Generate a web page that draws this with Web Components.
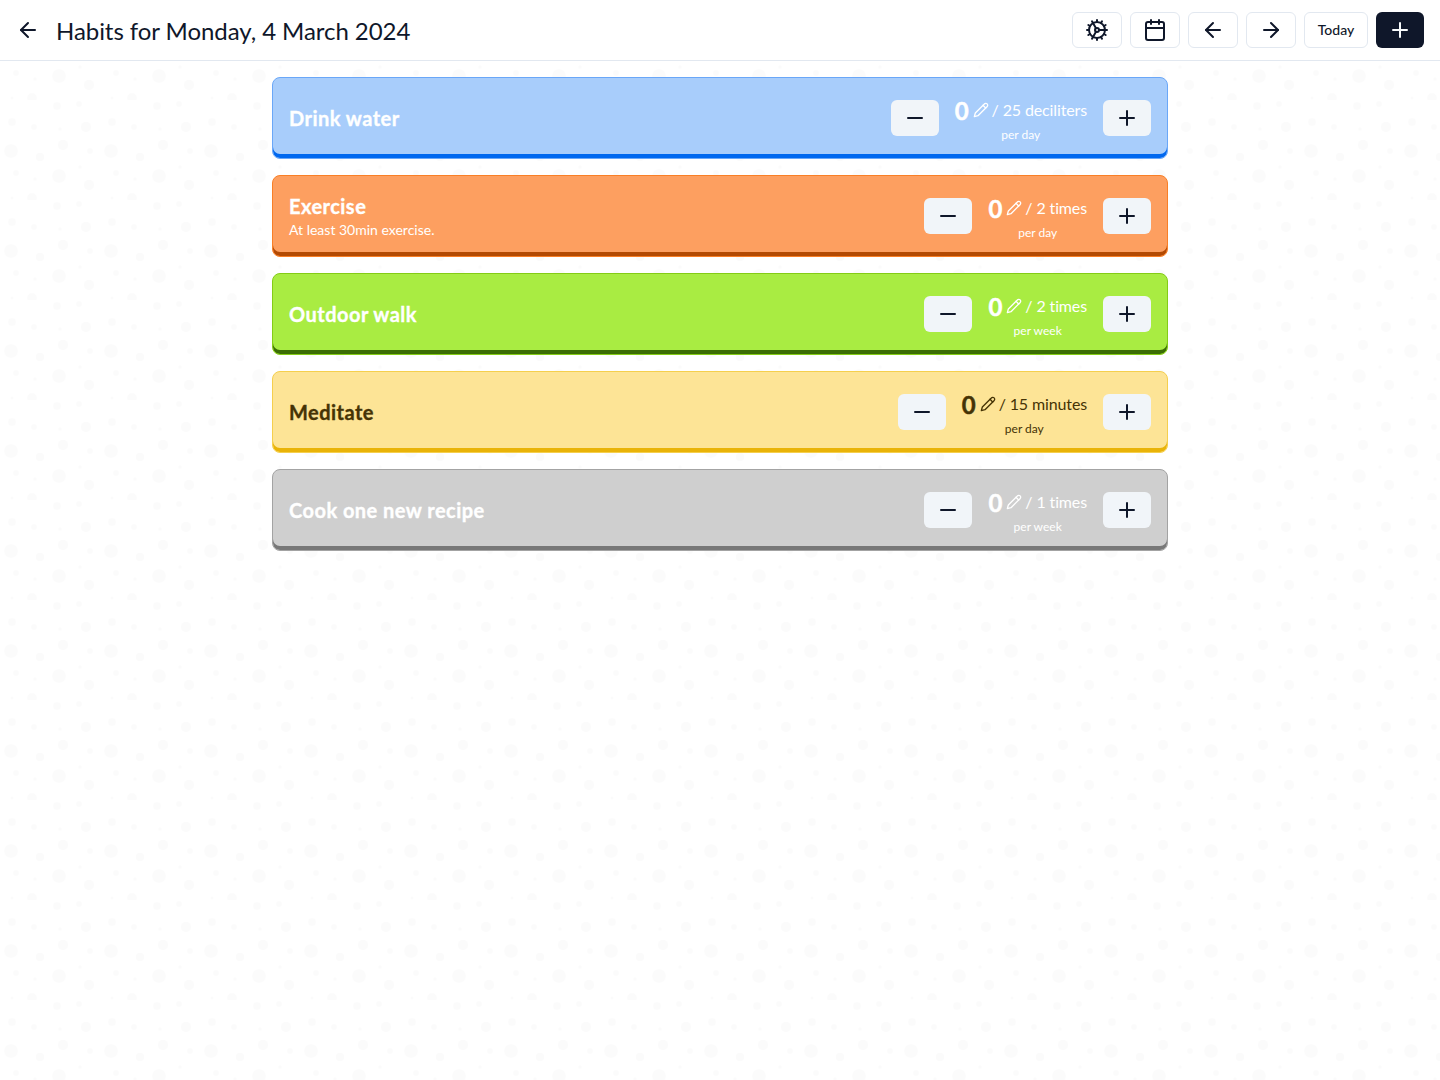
<!doctype html>
<html>
<head>
<meta charset="utf-8">
<title>Habits</title>
<style>
	html, body { margin: 0; min-height: 100%; }
	body {
		min-height: 1080px;
		font-family: Lato, "Noto Sans", sans-serif;
		color: #0f172a;
		background-color: #fff;
		background-image: url("data:image/svg+xml,%3Csvg xmlns='http://www.w3.org/2000/svg' width='100' height='100'%3E%3Cg fill='%23000' fill-opacity='.014'%3E%3Ccircle cx='12' cy='22' r='3.7'/%3E%3Ccircle cx='34' cy='27' r='2.7'/%3E%3Ccircle cx='60' cy='29' r='1.5'/%3E%3Ccircle cx='86' cy='27' r='5'/%3E%3Ccircle cx='11' cy='51' r='6.7'/%3E%3Ccircle cx='40' cy='57' r='4'/%3E%3Ccircle cx='63' cy='45' r='5'/%3E%3Ccircle cx='90' cy='51' r='2.7'/%3E%3Ccircle cx='16' cy='73' r='2.7'/%3E%3Ccircle cx='35' cy='79' r='1.5'/%3E%3Ccircle cx='59' cy='76' r='6.7'/%3E%3Ccircle cx='80' cy='67' r='1.5'/%3E%3Ccircle cx='89' cy='85' r='5'/%3E%3Ccircle cx='12' cy='98' r='1.3'/%3E%3Ccircle cx='32' cy='98' r='4.7'/%3E%3Ccircle cx='57' cy='6' r='3.7'/%3E%3Ccircle cx='79' cy='4' r='2.7'/%3E%3C/g%3E%3C/svg%3E");
	}
</style>
</head>
<body>
<habit-page>
	<span slot="title">Habits for Monday, 4 March 2024</span>
	<habit-card goal="25" unit="deciliters" period="per day" tone="#a8cdfb" line="#6aa7f8" edge="#0068ef" ink="#fff">Drink water</habit-card>
	<habit-card goal="2" unit="times" period="per day" tone="#fd9f60" line="#f97f26" edge="#b34a03" ink="#fff">Exercise<span slot="description">At least 30min exercise.</span></habit-card>
	<habit-card goal="2" unit="times" period="per week" tone="#a9ec42" line="#84cc16" edge="#3b6d05" ink="#fff">Outdoor walk</habit-card>
	<habit-card goal="15" unit="minutes" period="per day" tone="#fde496" line="#f5cf4d" edge="#e9b308" ink="#453305">Meditate</habit-card>
	<habit-card goal="1" unit="times" period="per week" tone="#cfcfcf" line="#a3a3a3" edge="#787878" ink="#fff">Cook one new recipe</habit-card>
</habit-page>

<script>
	const iconParts = {
		back: `<path d="m12 19-7-7 7-7"/><path d="M19 12H5"/>`,
		forward: `<path d="M5 12h14"/><path d="m12 5 7 7-7 7"/>`,
		plus: `<path d="M5 12h14"/><path d="M12 5v14"/>`,
		minus: `<path d="M5 12h14"/>`,
		pencil: `<path d="M17 3a2.85 2.83 0 1 1 4 4L7.5 20.5 2 22l1.5-5.5Z"/><path d="m15 5 4 4"/>`,
		calendar: `<path d="M8 2v4"/><path d="M16 2v4"/><rect width="18" height="18" x="3" y="4" rx="2"/><path d="M3 10h18"/>`,
		cog: `<path d="M12 20a8 8 0 1 0 0-16 8 8 0 0 0 0 16Z"/><path d="M12 14a2 2 0 1 0 0-4 2 2 0 0 0 0 4Z"/><path d="M12 2v2"/><path d="M12 22v-2"/><path d="m17 20.66-1-1.73"/><path d="M11 10.27 7 3.34"/><path d="m20.66 17-1.73-1"/><path d="m3.34 7 1.73 1"/><path d="M14 12h8"/><path d="M2 12h2"/><path d="m20.66 7-1.73 1"/><path d="m3.34 17 1.73-1"/><path d="m17 3.34-1 1.73"/><path d="m11 13.73-4 6.93"/>`
	};

	customElements.define("habit-icon",
		class extends HTMLElement {
			connectedCallback(){
				const size = this.getAttribute("size") || 24;
				this.attachShadow({ mode: "open" }).innerHTML = `
					<style>
						:host { display: inline-flex; flex: none; }
						svg { display: block; }
					</style>
					<svg xmlns="http://www.w3.org/2000/svg" width="${size}" height="${size}" viewBox="0 0 24 24" fill="none" stroke="currentColor" stroke-width="2" stroke-linecap="round" stroke-linejoin="round">${iconParts[this.getAttribute("name")]}</svg>
				`;
			}
		}
	);

	customElements.define("habit-button",
		class extends HTMLElement {
			connectedCallback(){
				this.attachShadow({ mode: "open" }).innerHTML = `
					<style>
						:host {
							display: inline-flex;
							flex: none;
							align-items: center;
							justify-content: center;
							box-sizing: border-box;
							width: 50px;
							height: 36px;
							border: 1px solid #e2e8f0;
							border-radius: 6px;
							background: #fff;
							color: #0f172a;
							font-size: 14px;
							font-weight: 500;
						}
						:host([variant="dark"]) { width: 48px; border: 0; background: #0f172a; color: #f8fafc; }
						:host([variant="soft"]) { width: 48px; border: 0; background: #f1f5f9; color: #0f172a; }
						:host([variant="text"]) { width: 64px; padding-bottom: 2px; }
					</style>
					<slot></slot>
				`;
			}
		}
	);

	customElements.define("habit-page",
		class extends HTMLElement {
			connectedCallback(){
				this.attachShadow({ mode: "open" }).innerHTML = `
					<style>
						:host { display: block; }
						header {
							display: flex;
							align-items: center;
							box-sizing: border-box;
							height: 61px;
							padding: 0 16px;
							border-bottom: 1px solid #e2e8f0;
							background: #fff;
						}
						.back { display: flex; margin-right: 16px; }
						h1 { flex: 1; margin: 0; padding-top: 2px; font-size: 24px; font-weight: 400; line-height: 32px; letter-spacing: -.06px; }
						nav { display: flex; gap: 8px; }
						main {
							display: flex;
							flex-direction: column;
							gap: 16px;
							width: 896px;
							margin: 0 auto;
							padding-top: 16px;
						}
					</style>
					<header>
						<span class="back"><habit-icon name="back"></habit-icon></span>
						<h1><slot name="title"></slot></h1>
						<nav>
							<habit-button><habit-icon name="cog"></habit-icon></habit-button>
							<habit-button><habit-icon name="calendar"></habit-icon></habit-button>
							<habit-button><habit-icon name="back"></habit-icon></habit-button>
							<habit-button><habit-icon name="forward"></habit-icon></habit-button>
							<habit-button variant="text">Today</habit-button>
							<habit-button variant="dark"><habit-icon name="plus"></habit-icon></habit-button>
						</nav>
					</header>
					<main><slot></slot></main>
				`;
			}
		}
	);

	customElements.define("habit-card",
		class extends HTMLElement {
			connectedCallback(){
				const attr = name => this.getAttribute(name);
				this.attachShadow({ mode: "open" }).innerHTML = `
					<style>
						:host {
							display: flex;
							align-items: center;
							gap: 16px;
							box-sizing: border-box;
							height: 82px;
							padding: 0 16px;
							border: 1px solid ${attr("line")};
							border-radius: 8px;
							background: ${attr("tone")};
							box-shadow: inset 0 -4px 0 ${attr("edge")};
							color: ${attr("ink")};
						}
						.text { flex: 1; min-width: 0; }
						.name { font-size: 20px; font-weight: 700; line-height: 28px; letter-spacing: .47px; -webkit-text-stroke: .35px currentColor; }
						::slotted([slot="description"]) { display: block; font-size: 14px; line-height: 20px; }
						.count { display: flex; flex-direction: column; align-items: center; padding-top: 2px; }
						.amount { display: flex; align-items: center; height: 30px; margin-bottom: 2px; font-size: 16px; letter-spacing: -.13px; }
						.amount b { width: 14px; font-size: 24px; text-align: center; letter-spacing: 0; -webkit-text-stroke: .5px currentColor; }
						.amount habit-icon { margin: 0 4px; }
						.amount span { padding-bottom: 2px; margin-left: -1px; }
						.period { font-size: 12px; line-height: 16px; }
					</style>
					<div class="text">
						<div class="name"><slot></slot></div>
						<slot name="description"></slot>
					</div>
					<habit-button variant="soft"><habit-icon name="minus"></habit-icon></habit-button>
					<div class="count">
						<div class="amount"><b>0</b><habit-icon name="pencil" size="16"></habit-icon><span>/ ${attr("goal")} ${attr("unit")}</span></div>
						<div class="period">${attr("period")}</div>
					</div>
					<habit-button variant="soft"><habit-icon name="plus"></habit-icon></habit-button>
				`;
			}
		}
	);
</script>
</body>
</html>
